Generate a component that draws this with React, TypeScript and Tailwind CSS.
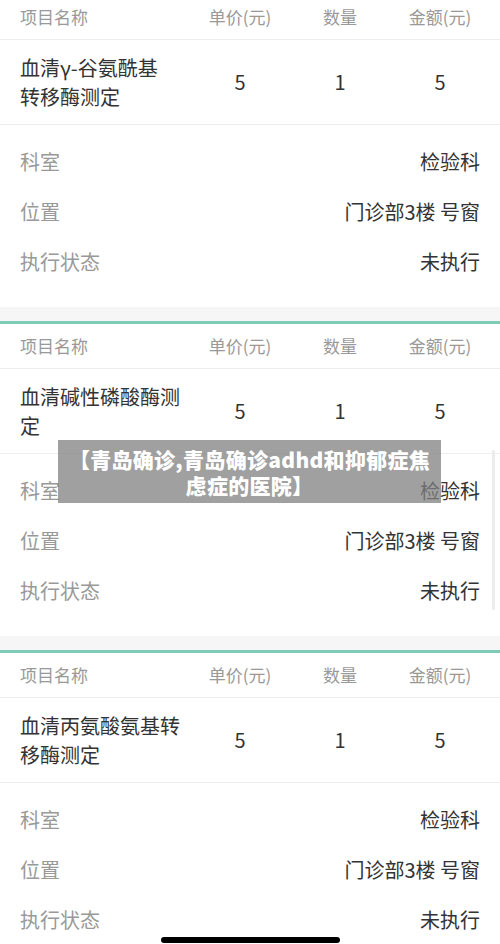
const items = [
  { name: ['血清γ-谷氨酰基', '转移酶测定'] },
  { name: ['血清碱性磷酸酶测', '定'] },
  { name: ['血清丙氨酸氨基转', '移酶测定'] },
];

const font = { fontFamily: '"Noto Sans CJK SC", "Noto Sans", sans-serif' };

function Card({ name }: { name: string[] }) {
  return (
    <div>
      <div className="h-[3px] bg-[#7ecbb8]" />
      <div className="flex h-[45px] items-center border-b border-[#eeeeee] pl-5 pr-[10px] text-[17px] text-[#999999]">
        <div className="flex-1">项目名称</div>
        <div className="w-[100px] text-center">单价(元)</div>
        <div className="w-[100px] text-center">数量</div>
        <div className="w-[100px] text-center">金额(元)</div>
      </div>
      <div className="flex h-[85px] items-center border-b border-[#eeeeee] pl-5 pr-[10px] text-[20px] text-[#333333]">
        <div className="flex-1 leading-[29px]">
          {name.map((l) => (
            <div key={l}>{l}</div>
          ))}
        </div>
        <div className="w-[100px] text-center">5</div>
        <div className="w-[100px] text-center">1</div>
        <div className="w-[100px] text-center">5</div>
      </div>
      <div className="pb-[20px] pt-[12px] text-[20px]">
        {[
          ['科室', '检验科'],
          ['位置', '门诊部3楼 号窗'],
          ['执行状态', '未执行'],
        ].map(([k, v]) => (
          <div key={k} className="flex h-[50px] items-center justify-between px-5">
            <span className="text-[#999999]">{k}</span>
            <span className="text-[#333333]">{v}</span>
          </div>
        ))}
      </div>
      <div className="h-[14px] bg-[#f6f6f6]" />
    </div>
  );
}

export default function App() {
  return (
    <div className="relative h-[944px] w-[500px] overflow-hidden bg-white" style={font}>
      <div className="-mt-2">
        {items.map((it, i) => (
          <Card key={i} name={it.name} />
        ))}
      </div>

      {/* scroll indicator */}
      <div className="absolute left-[492px] top-[450px] h-[160px] w-[3px] rounded-full bg-[#ececec]" />

      {/* watermark caption */}
      <div className="absolute left-[58px] top-[440px] flex h-[63px] w-[383px] flex-col items-center justify-center bg-[rgba(128,128,128,0.75)] text-[21px] font-black leading-[26px] tracking-[0.3px] text-white">
        <div>【青岛确诊,青岛确诊adhd和抑郁症焦</div>
        <div>虑症的医院】</div>
      </div>

      {/* home indicator */}
      <div className="absolute left-[161px] top-[937px] h-[6px] w-[179px] rounded-full bg-black" />
    </div>
  );
}
